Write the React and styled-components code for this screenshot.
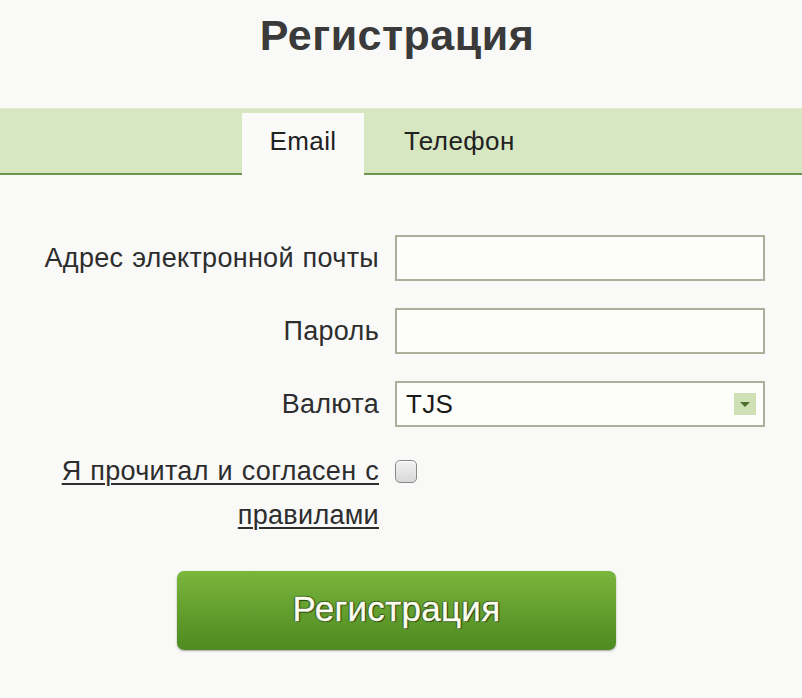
import React from 'react';
import styled, { createGlobalStyle } from 'styled-components';

const GlobalStyle = createGlobalStyle`
  html, body {
    margin: 0;
    padding: 0;
    background: #f9f9f9;
  }
  body {
    font-family: "Liberation Sans", Arial, sans-serif;
    color: #2b2b2b;
  }
`;

const Page = styled.div`
  width: 802px;
  height: 698px;
  background: #f9f9f8;
  overflow: hidden;
`;

const Title = styled.h1`
  margin: 0;
  padding-top: 11px;
  height: 96px;
  box-sizing: border-box;
  text-align: center;
  font-size: 43px;
  font-weight: bold;
  color: #3a3a3a;
  letter-spacing: 0.5px;
  padding-right: 8px;
`;

const TabBar = styled.div`
  height: 67px;
  background: #d6e7c1;
  border-top: 1px solid #e2eed6;
  border-bottom: 2px solid #6f9450;
  display: flex;
  align-items: flex-end;
  padding-left: 242px;
  box-sizing: border-box;
  margin-top: 12px;
`;

const Tab = styled.div`
  min-width: ${(p) => (p.$active ? '122px' : '0')};
  height: 62px;
  margin-bottom: -2px;
  padding: ${(p) => (p.$active ? '0 0 5px' : '0 40px 5px')};
  background: ${(p) => (p.$active ? '#fafaf8' : 'transparent')};
  display: flex;
  align-items: center;
  justify-content: center;
  font-size: 26px;
  letter-spacing: 0.4px;
  color: #222;
  box-sizing: border-box;
`;

const Form = styled.div`
  padding-top: 60px;
  display: flex;
  flex-direction: column;
  gap: 27px;
`;

const Row = styled.div`
  display: grid;
  grid-template-columns: 379px 370px;
  column-gap: 16px;
  align-items: center;
`;

const Label = styled.label`
  text-align: right;
  font-size: 27px;
  letter-spacing: 0.3px;
  word-spacing: 1px;
  color: #2d2d2d;
`;

const Input = styled.div`
  height: 46px;
  box-sizing: border-box;
  border: 2px solid #aeae9c;
  background: #fdfdf9;
  display: flex;
  align-items: center;
  justify-content: space-between;
  padding: 0 7px 0 9px;
  font-size: 26px;
  letter-spacing: 0.3px;
  color: #1a1a1a;
`;

const Arrow = styled.span`
  width: 22px;
  height: 22px;
  background: #cfe0b5;
  display: flex;
  align-items: center;
  justify-content: center;
  &::after {
    content: '';
    border-left: 5px solid transparent;
    border-right: 5px solid transparent;
    border-top: 5px solid #4d6e2c;
  }
`;

const AgreeRow = styled.div`
  display: grid;
  grid-template-columns: 379px 370px;
  column-gap: 16px;
  align-items: start;
  margin-top: 6px;
`;

const AgreeLabel = styled.a`
  text-align: right;
  font-size: 27px;
  letter-spacing: 0.3px;
  word-spacing: 1px;
  line-height: 44px;
  color: #2d2d2d;
  text-decoration: underline;
  text-decoration-thickness: 2px;
  text-underline-offset: 3px;
  margin-top: -11px;
`;

const Check = styled.span`
  width: 22px;
  height: 23px;
  box-sizing: border-box;
  border: 1px solid #888;
  border-radius: 5px;
  background: linear-gradient(#f2f2f2, #d8d8d8);
  box-shadow: inset 0 1px 1px #fff;
`;

const ButtonWrap = styled.div`
  display: flex;
  padding-left: 177px;
  margin-top: 34px;
`;

const Button = styled.button`
  width: 439px;
  height: 79px;
  border: none;
  border-radius: 7px;
  background: linear-gradient(#7ab53c, #4d8a20);
  box-shadow: 0 1px 2px rgba(0, 0, 0, 0.35);
  font-family: "Liberation Sans", Arial, sans-serif;
  font-size: 35px;
  letter-spacing: 0.3px;
  color: #fbfdee;
  -webkit-text-stroke: 0.4px #fbfdee;
  text-shadow: 1px 1px 1px #243b0c, -1px 0 1px #2f4c14, 0 -1px 1px #2f4c14, 1px 0 1px #2f4c14;
  padding-bottom: 4px;
`;

export default function App() {
  return (
    <Page>
      <GlobalStyle />
      <Title>Регистрация</Title>
      <TabBar>
        <Tab $active>Email</Tab>
        <Tab>Телефон</Tab>
      </TabBar>
      <Form>
        <Row>
          <Label>Адрес электронной почты</Label>
          <Input />
        </Row>
        <Row>
          <Label>Пароль</Label>
          <Input />
        </Row>
        <Row>
          <Label>Валюта</Label>
          <Input>
            TJS
            <Arrow />
          </Input>
        </Row>
        <AgreeRow>
          <AgreeLabel>Я прочитал и согласен с правилами</AgreeLabel>
          <Check />
        </AgreeRow>
      </Form>
      <ButtonWrap>
        <Button>Регистрация</Button>
      </ButtonWrap>
    </Page>
  );
}
